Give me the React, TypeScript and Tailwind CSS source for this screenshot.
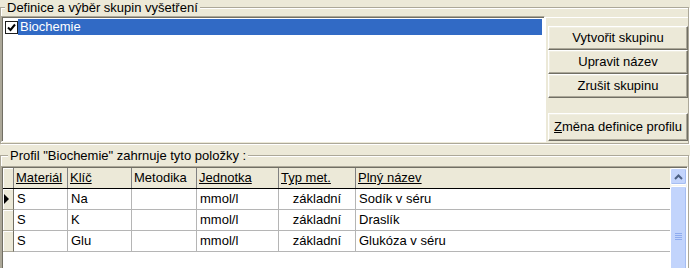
import React from "react";

const columns = [
  { label: "Materiál", w: "w-[54px]", underline: true },
  { label: "Klíč", w: "w-[64px]", underline: true },
  { label: "Metodika", w: "w-[65px]", underline: false },
  { label: "Jednotka", w: "w-[82px]", underline: true },
  { label: "Typ met.", w: "w-[77px]", underline: true },
  { label: "Plný název", w: "flex-1", underline: true },
];

const rows = [
  ["S", "Na", "", "mmol/l", "základní", "Sodík v séru"],
  ["S", "K", "", "mmol/l", "základní", "Draslík"],
  ["S", "Glu", "", "mmol/l", "základní", "Glukóza v séru"],
];

const btn =
  "w-[140px] flex items-center justify-center border border-t-white border-l-white border-r-[#716F64] border-b-[#716F64] shadow-[inset_-1px_-1px_0_#ACA899,inset_1px_1px_0_#F1EFE2] bg-[#ECE9D8]";

const ScrollBar = () => (
  <div className="w-[17px] bg-[#F4F3EE] flex flex-col">
    <div className="h-[17px] rounded-[2px] border border-white bg-[#C3D4FC] shadow-[inset_-1px_-1px_0_#A5BDF2] flex items-center justify-center">
      <svg width="9" height="6" viewBox="0 0 9 6">
        <path d="M1 5 L4.5 1.5 L8 5" stroke="#4D6185" strokeWidth="2" fill="none" />
      </svg>
    </div>
    <div className="mt-[1px] h-[100px] rounded-[2px] border border-white bg-[#C2D4FC] shadow-[inset_-1px_-1px_0_#A5BDF2] flex flex-col items-center justify-center gap-[1px]">
      <div className="w-[7px] h-[1px] bg-[#8EABEE]" />
      <div className="w-[7px] h-[1px] bg-[#8EABEE]" />
      <div className="w-[7px] h-[1px] bg-[#8EABEE]" />
      <div className="w-[7px] h-[1px] bg-[#8EABEE]" />
    </div>
  </div>
);

export default function App() {
  return (
    <div className="w-[690px] h-[268px] overflow-hidden bg-[#ECE9D8] text-[13px] text-black font-['Liberation_Sans',Arial,sans-serif]">
      {/* skupiny */}
      <fieldset className="w-[689px] border border-[#ACA899] shadow-[inset_1px_1px_0_#fff,1px_1px_0_#fff] pt-[1px] pb-[1px]">
        <legend className="ml-[4px] px-[2px] leading-[15px] bg-[#ECE9D8]">
          Definice a výběr skupin vyšetření
        </legend>
        <div className="flex">
          <div className="w-[544px] h-[126px] bg-white border border-t-[#ACA899] border-l-[#ACA899] border-r-white border-b-white shadow-[inset_1px_1px_0_#716F64] pl-[1px] pt-[1px] pr-[2px]">
            <div className="flex items-center h-[16px] mt-[1px]">
              <div className="ml-[2px] w-[13px] h-[13px] border border-[#1C1C1C] bg-white flex items-center justify-center">
                <svg width="9" height="9" viewBox="0 0 9 9">
                  <path d="M1 4.5 L3.5 7 L8 1.5" stroke="#000" strokeWidth="2" fill="none" />
                </svg>
              </div>
              <div className="flex-1 h-full bg-[#316AC5] text-white pl-[2px] leading-[16px]">Biochemie</div>
            </div>
          </div>
          <div className="flex-1 mt-[1px] border-l border-t border-white pl-[2px] pt-[8px] flex flex-col">
            <div className={`${btn} h-[24px]`}>Vytvořit skupinu</div>
            <div className={`${btn} h-[24px]`}>Upravit název</div>
            <div className={`${btn} h-[24px]`}>Zrušit skupinu</div>
            <div className={`${btn} h-[28px] mt-[15px]`}>
              <span><span className="underline">Z</span>měna definice profilu</span>
            </div>
          </div>
        </div>
      </fieldset>

      {/* polozky profilu */}
      <fieldset className="mt-[4px] w-[689px] border border-[#ACA899] shadow-[inset_1px_1px_0_#fff,1px_1px_0_#fff] pt-[3px]">
        <legend className="ml-[7px] px-[2px] leading-[15px] bg-[#ECE9D8]">
          Profil "Biochemie" zahrnuje tyto položky :
        </legend>
        <div className="w-[687px] h-[140px] border border-t-[#ACA899] border-l-[#ACA899] border-r-white border-b-white shadow-[inset_1px_1px_0_#716F64] pl-[1px] pt-[1px] flex">
          <div className="flex-1 bg-white flex flex-col">
            <div className="flex h-[21px] border-b border-black bg-[#ECE9D8]">
              <div className="w-[11px] border-r border-[#808080] shadow-[inset_1px_1px_0_#fff]" />
              {columns.map((c, i) => (
                <div
                  key={c.label}
                  className={`${c.w} flex items-center pl-[2px] ${i < columns.length - 1 ? "border-r border-[#808080]" : ""}`}
                >
                  <span className={c.underline ? "underline" : ""}>{c.label}</span>
                </div>
              ))}
            </div>
            {rows.map((r, ri) => (
              <div key={ri} className="flex h-[21px]">
                <div className="w-[11px] bg-[#ECE9D8] border-r border-b border-r-[#716F64] border-b-[#ACA899] shadow-[inset_1px_1px_0_#fff] flex items-center pl-[1px]">
                  {ri === 0 && (
                    <svg width="5" height="10" viewBox="0 0 5 10">
                      <path d="M0 0 L5 5 L0 10Z" fill="#000" />
                    </svg>
                  )}
                </div>
                {r.map((v, ci) => (
                  <div
                    key={ci}
                    className={`${columns[ci].w} flex items-center border-b border-[#B5B5B5] ${ci < r.length - 1 ? "border-r" : ""} ${ci === 4 ? "justify-center" : "pl-[3px]"}`}
                  >
                    {v}
                  </div>
                ))}
              </div>
            ))}
          </div>
          <ScrollBar />
        </div>
      </fieldset>
    </div>
  );
}
